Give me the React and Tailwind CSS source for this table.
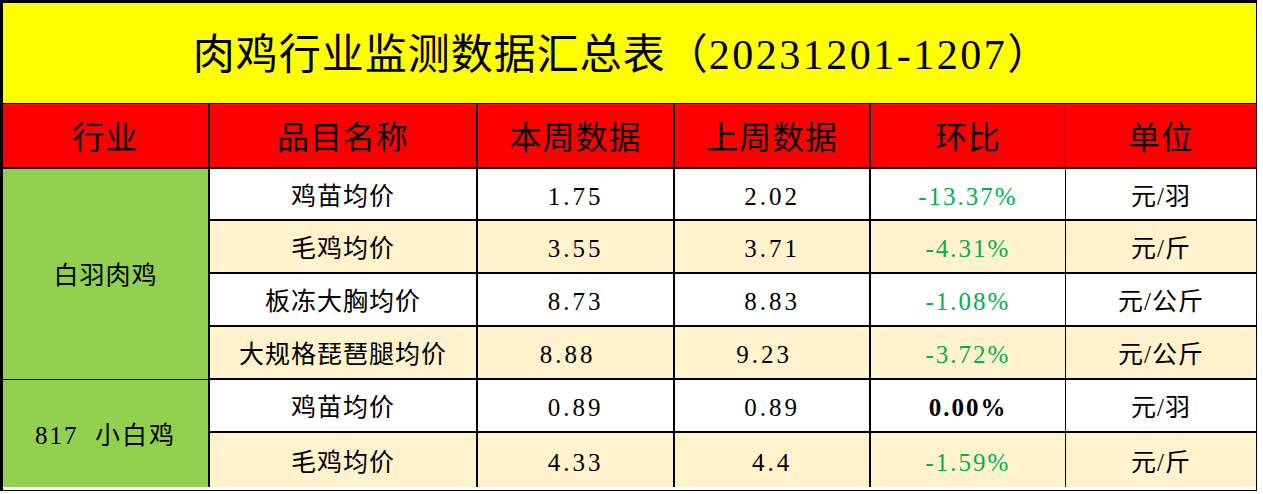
import React from 'react';

const FONT = { fontFamily: '"Liberation Serif", "Noto Sans CJK SC", serif' };

// rows of the sheet: name, this week, last week, change, unit
const rows = [
  { name: '鸡苗均价', cur: '1.75', prev: '2.02', pct: '-13.37%', unit: '元/羽', bg: 'bg-white' },
  { name: '毛鸡均价', cur: '3.55', prev: '3.71', pct: '-4.31%', unit: '元/斤', bg: 'bg-[#fff2cc]' },
  { name: '板冻大胸均价', cur: '8.73', prev: '8.83', pct: '-1.08%', unit: '元/公斤', bg: 'bg-white' },
  { name: '大规格琵琶腿均价', cur: '8.88', prev: '9.23', pct: '-3.72%', unit: '元/公斤', bg: 'bg-[#fff2cc]', shift: true },
  { name: '鸡苗均价', cur: '0.89', prev: '0.89', pct: '0.00%', unit: '元/羽', bg: 'bg-white', flat: true },
  { name: '毛鸡均价', cur: '4.33', prev: '4.4', pct: '-1.59%', unit: '元/斤', bg: 'bg-[#fff2cc]' },
];

const headers = ['行业', '品目名称', '本周数据', '上周数据', '环比', '单位'];

export default function App() {
  return (
    <div className="w-[1263px] h-[494px] bg-white overflow-hidden" style={FONT}>
      <div className="w-[1257px] border-l-[3px] border-t-[3px] border-r border-b border-black">
        <div className="h-[101px] bg-[#ffff00] border-b border-black flex items-center justify-center pr-4 pt-1">
          <span className="text-[42px] text-black tracking-[1px]">
            肉鸡行业监测数据汇总表（<span className="tracking-[2.5px]">20231201-1207</span>）
          </span>
        </div>
        <div className="grid grid-cols-[207px_268px_197px_196px_195px_190px] grid-rows-[65px_52px_53px_53px_53px_53px_54px] text-black">
          {headers.map((h, i) => (
            <div
              key={h}
              className={`bg-[#ff0000] border-b-2 border-black flex items-center justify-center text-[32px] tracking-[1px] pt-1 ${
                i === 4 ? 'border-r' : i === 5 ? '' : 'border-r-2'
              }`}
            >
              {h}
            </div>
          ))}

          <div className="row-span-4 bg-[#92d050] border-r-2 border-b border-black flex items-center justify-center text-[25px] tracking-[1px] pt-1">
            白羽肉鸡
          </div>
          {rows.slice(0, 4).map((r, i) => (
            <Row key={i} r={r} />
          ))}
          <div className="row-span-2 bg-[#92d050] border-r-2 border-black flex items-center justify-center text-[25px] tracking-[2px] pt-1">
            817&nbsp;&nbsp;小白鸡
          </div>
          {rows.slice(4).map((r, i) => (
            <Row key={i} r={r} last={i === 1} />
          ))}
        </div>
        <div className="h-[3px] bg-white" />
      </div>
    </div>
  );
}

function Row({ r, last }) {
  const cell = `${r.bg} border-black flex items-center justify-center pt-[5px] ${last ? '' : 'border-b-2'}`;
  return (
    <>
      <div className={`${cell} border-r-2 text-[25px] tracking-[1px]`}>{r.name}</div>
      <div className={`${cell} border-r-2 text-[25px] tracking-[3px] ${r.shift ? 'pr-4' : ''}`}>{r.cur}</div>
      <div className={`${cell} border-r-2 text-[25px] tracking-[3px] ${r.shift ? 'pr-4' : ''}`}>{r.prev}</div>
      <div className={`${cell} border-r text-[25px] tracking-[2px] ${r.flat ? 'text-black font-bold' : 'text-[#00b050]'}`}>
        {r.pct}
      </div>
      <div className={`${cell} text-[25px] tracking-[1px]`}>{r.unit}</div>
    </>
  );
}
